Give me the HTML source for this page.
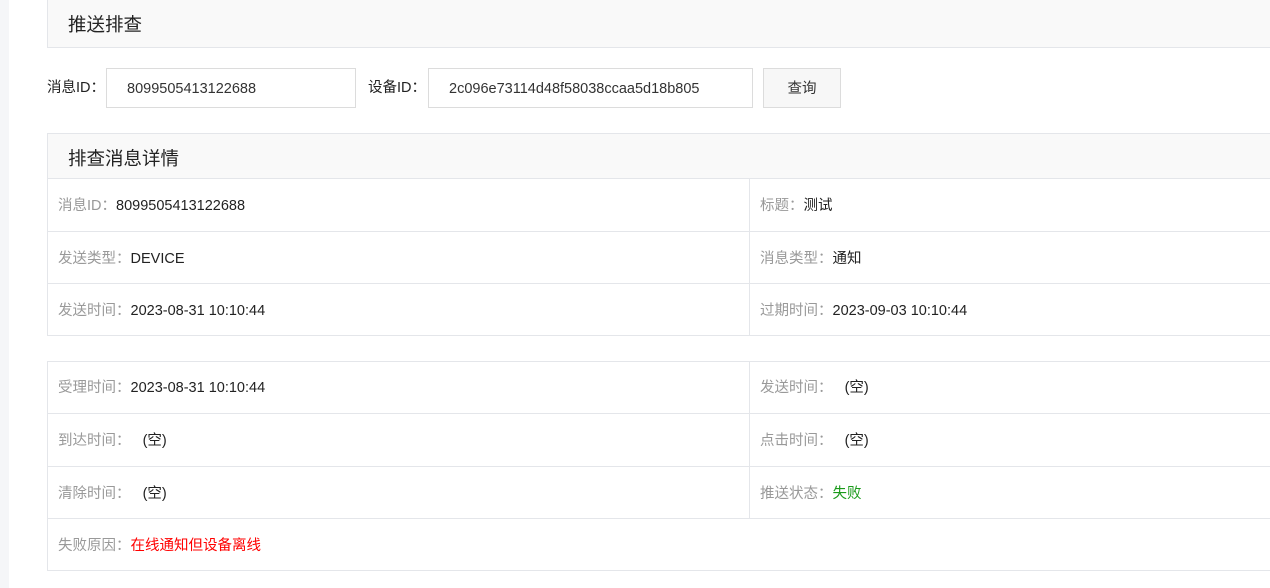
<!DOCTYPE html>
<html><head><meta charset="utf-8"><style>
*{box-sizing:border-box;margin:0;padding:0}
body{width:1270px;height:588px;overflow:hidden;background:#fff;font-family:"Liberation Sans","Noto Sans CJK SC",sans-serif;font-size:14.5px;color:#222;position:relative}
.strip{position:absolute;left:0;top:0;width:9px;height:588px;background:#f5f6f8}
.box{position:absolute;left:47px;width:1240px;border:1px solid #e4e6ea}
.hd{background:#f9f9f9;font-size:18.5px;color:#222;padding-left:20px}
.abs{position:absolute}
.inp{position:absolute;top:68px;height:40px;border:1px solid #dcdcdc;padding-left:20px;line-height:40px;color:#333}
.row{position:absolute;left:0;width:100%;border-top:1px solid #e4e6ea}
.c{position:absolute;top:0;height:100%;padding-left:10px;white-space:pre;line-height:54px}
.l{color:#999}
.split{position:absolute;left:701px;width:1px;background:#e4e6ea}
</style></head><body>
<div class="strip"></div>
<div class="box hd" style="top:-1px;height:49px;line-height:50px">推送排查</div>
<div class="abs" style="left:47px;top:68px;line-height:40px">消息ID：</div>
<div class="inp" style="left:106px;width:250px">8099505413122688</div>
<div class="abs" style="left:368px;top:68px;line-height:40px">设备ID：</div>
<div class="inp" style="left:428px;width:325px">2c096e73114d48f58038ccaa5d18b805</div>
<div class="inp" style="left:763px;width:78px;padding:0;text-align:center;background:#f7f7f7">查询</div>

<div class="box" style="top:133px;height:203px">
 <div class="hd" style="height:44px;line-height:49px">排查消息详情</div>
 <div class="split" style="top:44px;height:158px"></div>
 <div class="row" style="top:44px;height:53px"><div class="c"><span class="l">消息ID：</span>8099505413122688</div><div class="c" style="left:702px"><span class="l">标题：</span>测试</div></div>
 <div class="row" style="top:97px;height:53px"><div class="c"><span class="l">发送类型：</span>DEVICE</div><div class="c" style="left:702px"><span class="l">消息类型：</span>通知</div></div>
 <div class="row" style="top:149px;height:53px"><div class="c"><span class="l">发送时间：</span>2023-08-31 10:10:44</div><div class="c" style="left:702px"><span class="l">过期时间：</span>2023-09-03 10:10:44</div></div>
</div>

<div class="box" style="top:361px;height:210px">
 <div class="split" style="top:0;height:156px"></div>
 <div class="row" style="top:0;height:51px;border-top:none"><div class="c" style="line-height:53px"><span class="l">受理时间：</span>2023-08-31 10:10:44</div><div class="c" style="left:702px;line-height:53px"><span class="l">发送时间：</span>   (空)</div></div>
 <div class="row" style="top:51px;height:53px"><div class="c"><span class="l">到达时间：</span>   (空)</div><div class="c" style="left:702px"><span class="l">点击时间：</span>   (空)</div></div>
 <div class="row" style="top:104px;height:52px"><div class="c"><span class="l">清除时间：</span>   (空)</div><div class="c" style="left:702px"><span class="l">推送状态：</span><span style="color:#1a9a1a">失败</span></div></div>
 <div class="row" style="top:156px;height:53px"><div class="c"><span class="l">失败原因：</span><span style="color:#f00">在线通知但设备离线</span></div></div>
</div>
</body></html>
